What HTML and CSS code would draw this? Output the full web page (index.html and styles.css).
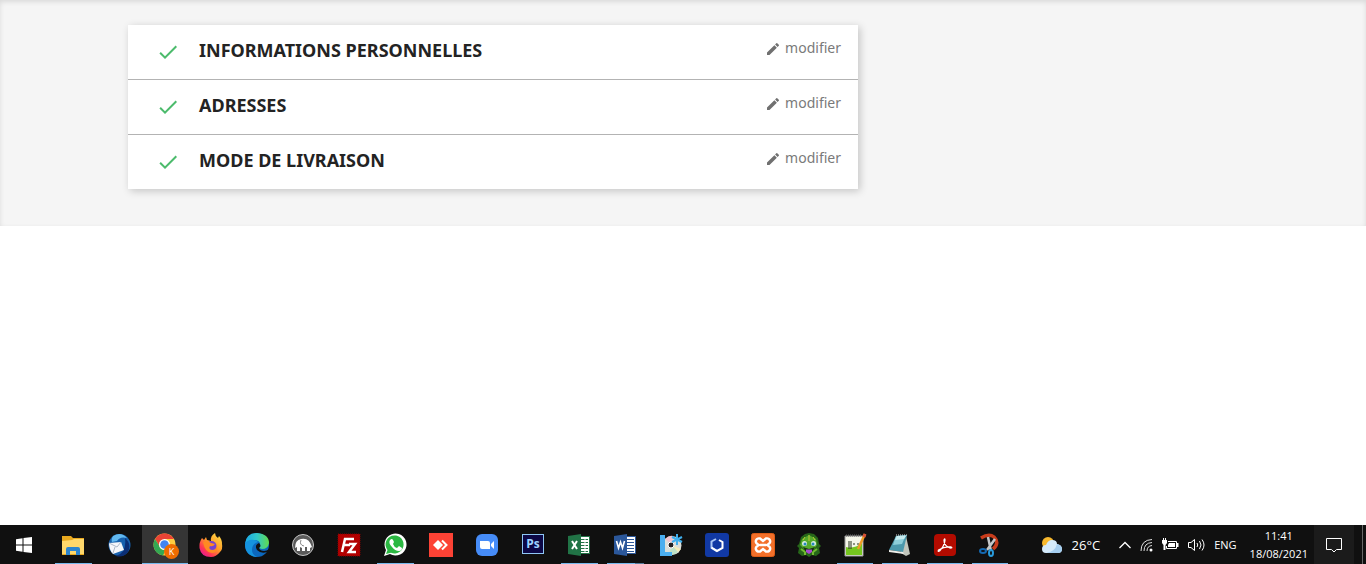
FILE: index.html
```html
<!DOCTYPE html>
<html lang="fr">
<head>
    <meta charset="UTF-8">
    <meta name="viewport" content="width=device-width, initial-scale=1.0">
    <title>Commande</title>
    <link rel="stylesheet" href="styles.css">
</head>
<body>
    <!-- Shared icons -->
    <svg class="sprite" aria-hidden="true">
        <symbol id="check" viewBox="0 0 24 24"><path d="M9 16.17L4.83 12l-1.42 1.41L9 19 21 7l-1.41-1.41z"/></symbol>
        <symbol id="pencil" viewBox="0 0 24 24"><path d="M3 17.25V21h3.75L17.81 9.94l-3.75-3.75L3 17.25zM20.71 7.04a1 1 0 0 0 0-1.41l-2.34-2.34a1 1 0 0 0-1.41 0l-1.83 1.83 3.75 3.75 1.83-1.83z"/></symbol>
    </svg>

    <main class="checkout">
        <div class="container">
            <div class="steps">
                <section class="step">
                    <svg class="done"><use href="#check"/></svg>
                    <h1>Informations personnelles</h1>
                    <a class="edit" href="#"><svg><use href="#pencil"/></svg>modifier</a>
                </section>
                <section class="step">
                    <svg class="done"><use href="#check"/></svg>
                    <h1>Adresses</h1>
                    <a class="edit" href="#"><svg><use href="#pencil"/></svg>modifier</a>
                </section>
                <section class="step">
                    <svg class="done"><use href="#check"/></svg>
                    <h1>Mode de livraison</h1>
                    <a class="edit" href="#"><svg><use href="#pencil"/></svg>modifier</a>
                </section>
            </div>
        </div>
    </main>

    <footer class="taskbar">
        <button class="start" aria-label="Start">
            <svg width="16" height="16" viewBox="0 0 16 16"><path fill="#fff" d="M0 2.3 6.5 1.3V7.5H0zM7.5 1.1 16 0V7.5H7.5zM0 8.5H6.5V14.7L0 13.7zM7.5 8.5H16V16L7.5 14.9z"/></svg>
        </button>

        <div class="apps">
            <button class="app open" aria-label="Explorer">
                <svg viewBox="0 0 24 24"><path fill="#e9a91f" d="M1 3h9l2 2h11v17H1z"/><path fill="#ffd86b" d="M1 8l10-1 2-1h10v15H1z"/><path fill="#2c85cf" d="M5 22v-6q0-2 2-2h10q2 0 2 2v6h-4v-4H9v4z"/></svg>
            </button>
            <button class="app" aria-label="Thunderbird">
                <svg viewBox="0 0 24 24"><circle cx="12.500" cy="12" r="11" fill="#1760ad"/><path fill="#61b8ef" d="M6 3Q14-2 20 5 13 3 10 8L5 9q-1-3 1-6z"/><path fill="#0b2e75" d="M18 5q7 6 3 14-5 6-12 4 11-3 9-18z"/><path fill="#f5f6fa" d="M2 10l12-1 3 8-11 4q-4-4-4-11z"/><path d="M2 10l8 4 4-5M6 20l2-6" fill="none" stroke="#aeb8c9"/></svg>
            </button>
            <button class="app open active" aria-label="Chrome">
                <svg viewBox="0 0 24 24"><circle cx="11.500" cy="11.500" r="11" fill="#ffcd40"/><path fill="#ea4335" d="M2 6a11 11 0 0 1 19 0H11.500L7 14z"/><path fill="#34a853" d="M2 6l5 8q2 3 6 2l-3 6.500A11 11 0 0 1 2 6z"/><circle cx="11.500" cy="11.500" r="5.500" fill="#fff"/><circle cx="11.500" cy="11.500" r="4.300" fill="#4285f4"/></svg>
                <span class="profile">K</span>
            </button>
            <button class="app" aria-label="Firefox">
                <svg viewBox="0 0 24 24"><defs><linearGradient id="fox" x1="1" y1="0" x2=".2" y2="1"><stop offset="0" stop-color="#ffe64a"/><stop offset=".5" stop-color="#ff9a28"/><stop offset=".8" stop-color="#ff3654"/><stop offset="1" stop-color="#e5189a"/></linearGradient></defs><path fill="url(#fox)" d="M3 5l2 2 2-3 1 3 4 1q-1-5 4-8 0 3 3 5l1-2q3 3 3 8 1 5-2 8-4 5-9 5-10 0-11.500-9Q0 9 3 5z"/><circle cx="12.500" cy="13" r="5" fill="#7542d1"/><path fill="#ff8a22" d="M4 9q5-2 8 1l4 1q-2 3-5 2-2 3 2 4 4 0 5-4 1 7-5 7-7 0-9-11z"/></svg>
            </button>
            <button class="app" aria-label="Edge">
                <svg viewBox="0 0 24 24"><defs><linearGradient id="edge"><stop offset="0" stop-color="#1ba8e8"/><stop offset=".5" stop-color="#31c8c9"/><stop offset="1" stop-color="#61da4c"/></linearGradient></defs><circle cx="12" cy="12" r="12" fill="#0c67bd"/><path fill="url(#edge)" d="M0 11Q1 0 12 0q12 1 12 10-1 6-7 6-5-1-2-3 1-6-6-6-6 0-9 4z"/><path fill="#1593df" d="M0 11q3-5 9-4 3 0 4 2-6 2-6 8 0 5 5 7Q0 23 0 11z"/><path fill="#111" d="M14 10q3 3 0 5 1 3 5 3 3 0 5-2v2l-2 1q-6 2-10-2-3-5 2-7z"/></svg>
            </button>
            <button class="app" aria-label="MAMP">
                <svg viewBox="0 0 24 24"><circle cx="12" cy="12" r="10.500" fill="#5b5b5b" stroke="#c6c6c6"/><path fill="#fff" d="M4 15q0-8 6-9 8-2 11 8l-2 1v3h-3v-4h-2v4h-3v-3l-2-1v4H6v-4z"/><path d="M10 7q-2 5 3 6" fill="none" stroke="#888"/></svg>
            </button>
            <button class="app" aria-label="FileZilla">
                <svg viewBox="0 0 24 24"><path fill="#b20000" d="M1 1h22v22H1z"/><path d="M1 1h22v22H1z" fill="none" stroke="#850000" stroke-dasharray="1 1"/><path d="M5 19 8 6h9M7 12h6M12 11h6l-6 8h7" fill="none" stroke="#fff" stroke-width="2.500"/></svg>
            </button>
            <button class="app open" aria-label="WhatsApp">
                <svg viewBox="0 0 24 24"><path fill="#fff" d="M1 23l2-6A11 11 0 1 1 7 21z"/><path fill="#2bb842" d="M3 21l1.500-4A9 9 0 1 1 8 19.700z"/><path fill="#fff" d="M7 7q2-2 3 0l1 2-1 2q1 3 4 4l2-2 3 2q0 3-3 3-4 0-7-4-4-4-2-7z"/></svg>
            </button>
            <button class="app" aria-label="AnyDesk">
                <svg viewBox="0 0 24 24"><path fill="#fc4235" d="M0 0h24v24H0z"/><path fill="#fff" d="M4 12l5-5 5 5-5 5z"/><path d="M13 7.500 17.500 12 13 16.500" fill="none" stroke="#fff" stroke-width="2"/></svg>
            </button>
            <button class="app" aria-label="Zoom">
                <svg viewBox="0 0 24 24"><rect x="1" y="1" width="22" height="22" rx="6" fill="#468cf8"/><path fill="#fff" d="M5 8h8q2 0 2 2v6H7q-2 0-2-2zM16 11l3-3v8l-3-3z"/></svg>
            </button>
            <button class="app" aria-label="Photoshop"><span class="ps">Ps</span></button>
            <button class="app open" aria-label="Excel">
                <svg viewBox="0 0 24 24"><path fill="#fff" stroke="#217346" d="M13 3.500h9.500v17H13z"/><path d="M14 6.500h7M14 9.500h7M14 12.500h7M14 15.500h7M14 18.500h7" stroke="#217346"/><path d="M18 4v16" stroke="#fff"/><path fill="#217346" d="M1 3l13-2v22L1 21z"/><path d="M5 8l5 8m0-8-5 8" stroke="#fff" stroke-width="2"/></svg>
            </button>
            <button class="app open grouped" aria-label="Word">
                <svg viewBox="0 0 24 24"><path fill="#fff" stroke="#2b579a" d="M13 3.500h9.500v17H13z"/><path d="M14 6.500h7M14 9.500h7M14 12.500h7M14 15.500h7M14 18.500h7" stroke="#2b579a"/><path fill="#2b579a" d="M1 3l13-2v22L1 21z"/><path d="M3.500 8l2 7 2-6 2 6 2-7" fill="none" stroke="#fff" stroke-width="1.600"/></svg>
            </button>
            <button class="app" aria-label="Disc tools">
                <svg viewBox="0 0 24 24"><circle cx="13" cy="12.500" r="9.500" fill="#dadfda"/><path fill="#bfe3c8" d="M13 12 19 19q-4 4-9 2z"/><path fill="#efc3cf" d="M13 12 6 6q4-4 8-3z"/><path fill="#f5ecb8" d="M13 12l9 4-3 3z"/><path fill="#4aaef0" d="M1 2h5v17h7v4H1z"/><circle cx="12" cy="12" r="3" fill="#222" stroke="#fff"/><path d="M18 1v11m-5-8 10 5m0-5-10 5" stroke="#3fb0ee" stroke-width="2"/></svg>
            </button>
            <button class="app" aria-label="Cube">
                <svg viewBox="0 0 24 24"><rect width="24" height="24" rx="3" fill="#1139a4"/><path d="M11 6 6.500 8.500V15L12 18" fill="none" stroke="#a9c6f5" stroke-width="2"/><path d="M6.500 14.500 12 18l5.500-3V9L14 7" fill="none" stroke="#fff" stroke-width="2"/></svg>
            </button>
            <button class="app" aria-label="XAMPP">
                <svg viewBox="0 0 24 24"><rect x=".5" y=".5" width="23" height="23" rx="2" fill="#f3702a" stroke="#dd5c17"/><path d="M9 12h6M8 12Q4 10 5 7.500 6 5 9 5.500L12 8l3-2.500q3-.5 4 2 1 2.500-3 4.500 4 2 3 4.500-1 2.500-4 2L12 16l-3 2.500q-3 .5-4-2Q4 14 8 12z" fill="none" stroke="#fff" stroke-width="2.400"/></svg>
            </button>
            <button class="app" aria-label="Grenouille">
                <svg viewBox="0 0 24 24"><path fill="#276719" d="M4 4l4-3 4-1 5 1 4 4 1 6 2 2-2 2 1 5-4 3-4-1-3 2-3-2-4 1-4-3 1-5-2-2 2-2z"/><path fill="#55aa2b" d="M5 6l7-4 7 4 1 6-3 4-5 1-5-1-4-4z"/><path d="M12 2v6M8 4l-2 3M16 4l2 3" stroke="#c0ca36"/><path d="M4 16l4 3v3M20 16l-4 3v3" fill="none" stroke="#72bd32" stroke-width="2"/><circle cx="7.500" cy="10.500" r="2.500" fill="#d6ece0"/><circle cx="16.500" cy="10.500" r="2.500" fill="#d6ece0"/><circle cx="8" cy="11" r="1.500" fill="#2588bd"/><circle cx="16" cy="11" r="1.500" fill="#2588bd"/><path fill="#17320f" d="M6 14l6 2 6-2-3 5H9z"/><path fill="#a94ad0" d="M9 16.500h6V19l-3 2-3-2z"/></svg>
            </button>
            <button class="app open narrow" aria-label="Notepad++">
                <svg viewBox="0 0 24 24"><path fill="#f4f5e9" stroke="#999" d="M2 3h18v20H2z"/><path fill="#75c51f" d="M3 14q8 2 16-4v12H3z"/><path d="M3 2.500h16" stroke="#666" stroke-width="2" stroke-dasharray="1 1"/><path d="M6 8v8m2-8v8m2-5h2m2 0h2" stroke="#26321c"/><path d="M22 1 15 16" stroke="#ef9c28" stroke-width="2.500"/><path d="M22 1l-1 3" stroke="#d64e37" stroke-width="3"/></svg>
            </button>
            <button class="app open narrow" aria-label="Notepad">
                <svg viewBox="0 0 24 24"><path fill="#c1c6bc" d="M18 3l4 18-4 2-5-3z"/><path fill="#4c99ac" d="M8 3 19 2l-4 17-14-2z"/><path fill="#8dced9" d="M8 3l10-1-4 9-9 1z"/><path fill="#c8edf0" d="M9 3h9l-2 3-9 1z"/><path d="M8 2h11" stroke="#ddd" stroke-dasharray="1 1"/><path fill="#efefea" d="M1 17l14 2 1 2-15-2z"/></svg>
            </button>
            <button class="app open narrow" aria-label="Acrobat">
                <svg viewBox="0 0 24 24"><rect x="1" y="1" width="22" height="22" rx="4" fill="#b30b00"/><path d="M5.500 17q-1 2 1 1 5-5 5.500-11 0-2-1 0 0 6 6 8 3 0 1-1-6-1-12.500 3z" fill="none" stroke="#fff" stroke-width="1.300"/></svg>
            </button>
            <button class="app open narrow" aria-label="Snipping Tool">
                <svg viewBox="0 0 24 24"><path d="M3 5q8-5 13-1 6 6-1 12" fill="none" stroke="#c93c1b" stroke-width="3.500"/><path d="M10 4l3 14m4-12-8 11" stroke="#c5c8ca" stroke-width="2.500"/><ellipse cx="5" cy="18" rx="3" ry="2" fill="none" stroke="#1569b2" stroke-width="2"/><ellipse cx="13" cy="20" rx="2" ry="3" fill="none" stroke="#299bdc" stroke-width="2"/></svg>
            </button>
        </div>

        <div class="tray">
            <button class="weather">
                <svg width="22" height="18" viewBox="0 0 22 18"><circle cx="7" cy="7" r="6" fill="#f8b92e"/><path fill="#d5ebfb" d="M5 17q-4 0-4-4 0-4 4-4 2-5 6-5 5 0 5 4 5 1 5 5 0 4-4 4z"/><path fill="#a5cef0" d="M5 17q9-1 11-9 5 1 5 5 0 4-4 4z"/></svg>
                <span>26°C</span>
            </button>
            <button aria-label="Show hidden icons"><svg width="12" height="8" viewBox="0 0 12 8"><path d="M.5 7 6 1.500 11.500 7" fill="none" stroke="#fff" stroke-width="1.300"/></svg></button>
            <button aria-label="Wi-Fi"><svg width="13" height="14" viewBox="0 0 13 14"><g fill="none" stroke="#ddd"><path d="M1 13Q1 2 12 1.500"/><path d="M4 13q0-8 8-8.500"/><path d="M7 13q0-5 5-5.500"/></g><circle cx="11" cy="12" r="1.500" fill="#fff"/></svg></button>
            <button aria-label="Battery"><svg width="17" height="13" viewBox="0 0 17 13"><path d="M6 3.500h8.500v7h-10V8" fill="none" stroke="#fff"/><path fill="#fff" d="M7 5h6v4H6V7zM15 5h1.500v4H15zM0 2h5v3L3.500 7V12h-2V7L0 5zM1 0h1v2H1zM3 0h1v2H3z"/></svg></button>
            <button aria-label="Volume"><svg width="17" height="14" viewBox="0 0 17 14"><g fill="none" stroke="#fff"><path d="M.5 4.500H3L6.500 1.500v11L3 9.500H.5z"/><path d="M9 5q1.500 2 0 4M11.500 3q3 4 0 8M14 1.500q4 5.500 0 11"/></g></svg></button>
            <button class="lang">ENG</button>
            <button class="clock"><span>11:41</span><span>18/08/2021</span></button>
            <button class="notice" aria-label="Notifications"><svg width="16" height="16" viewBox="0 0 16 16"><path d="M.5 1.500h15v11h-5L8 15l-2.500-2.500h-5z" fill="none" stroke="#fff"/></svg></button>
            <button class="desktop" aria-label="Show desktop"></button>
        </div>
    </footer>
</body>
</html>
```

FILE: styles.css
```css
* {
    box-sizing: border-box;
}

body {
    margin: 0;
    min-height: 100vh;
    display: flex;
    flex-direction: column;
    background-color: #ffffff;
    font-family: 'Noto Sans', sans-serif;
}

button {
    border: none;
    padding: 0;
    background: none;
    color: #ffffff;
    font-family: 'Open Sans', sans-serif;
    cursor: pointer;
}

svg {
    display: block;
    flex: none;
}

.sprite {
    position: absolute;
    width: 0;
    height: 0;
}

/* Checkout steps */
.checkout {
    padding: 25px 0 37px;
    background-color: #f5f5f5;
    box-shadow: inset 0 2px 5px rgba(0, 0, 0, 0.11);
}

.container {
    max-width: 1140px;
    margin: 0 auto;
    padding: 0 15px;
}

.steps {
    max-width: 730px;
    background-color: #ffffff;
    box-shadow: 2px 2px 8px rgba(0, 0, 0, 0.2);
}

.step {
    display: flex;
    align-items: flex-start;
    padding: 13px 17px 15px 28px;
    border-bottom: 1px solid #b3b3b3;
}

.step:last-child {
    border-bottom: none;
}

.done {
    width: 24px;
    height: 24px;
    margin: 2px 19px 0 0;
    fill: #4cbb6c;
}

.step h1 {
    flex: 1;
    margin: 0;
    font-size: 18px;
    line-height: 24px;
    font-weight: bold;
    text-transform: uppercase;
    color: #232323;
}

.edit {
    display: flex;
    gap: 4px;
    font-size: 14px;
    line-height: 20px;
    color: #7a7a7a;
    text-decoration: none;
}

.edit svg {
    width: 16px;
    height: 16px;
    margin-top: 3px;
    fill: #707070;
}

/* Taskbar */
.taskbar {
    display: flex;
    height: 39px;
    margin-top: auto;
    background-color: #101010;
    overflow: hidden;
}

.start {
    display: flex;
    align-items: center;
    width: 50px;
    padding-left: 16px;
}

.apps {
    display: flex;
}

.app {
    position: relative;
    display: flex;
    align-items: center;
    justify-content: center;
    width: 46px;
}

.app svg {
    width: 24px;
    height: 24px;
}

.narrow {
    width: 45px;
}

.active {
    background-color: #353535;
}

.open::after {
    content: "";
    position: absolute;
    left: 5px;
    right: 4px;
    bottom: 0;
    height: 1px;
    background-color: #76b9ed;
}

.active::after {
    left: 0;
    right: 0;
}

.grouped::after {
    background: linear-gradient(to right, #76b9ed 28px, #557c9c 28px);
}

.profile {
    position: absolute;
    right: 9px;
    bottom: 5px;
    width: 15px;
    height: 15px;
    border-radius: 50%;
    background-color: #ef6c00;
    font-size: 9px;
    line-height: 15px;
}

.ps {
    width: 22px;
    height: 20px;
    margin-bottom: 2px;
    border: 1px solid #8fc7f5;
    background-color: #0c0846;
    color: #9dd2ff;
    font-size: 12px;
    font-weight: bold;
    line-height: 18px;
}

.tray {
    display: flex;
    align-items: center;
    gap: 9px;
    margin-left: auto;
}

.weather {
    display: flex;
    align-items: center;
    gap: 9px;
    margin-right: 10px;
    font-size: 13px;
}

.lang {
    font-size: 11px;
}

.clock {
    display: flex;
    flex-direction: column;
    align-items: center;
    margin: 0 -3px 0 4px;
    font-size: 11px;
    line-height: 18px;
}

.notice {
    display: flex;
    align-items: center;
    justify-content: center;
    width: 40px;
    height: 39px;
    background-color: #1b1b1b;
}

.desktop {
    width: 4px;
    height: 39px;
    margin-left: -1px;
    border-left: 1px solid #666666;
}
```
